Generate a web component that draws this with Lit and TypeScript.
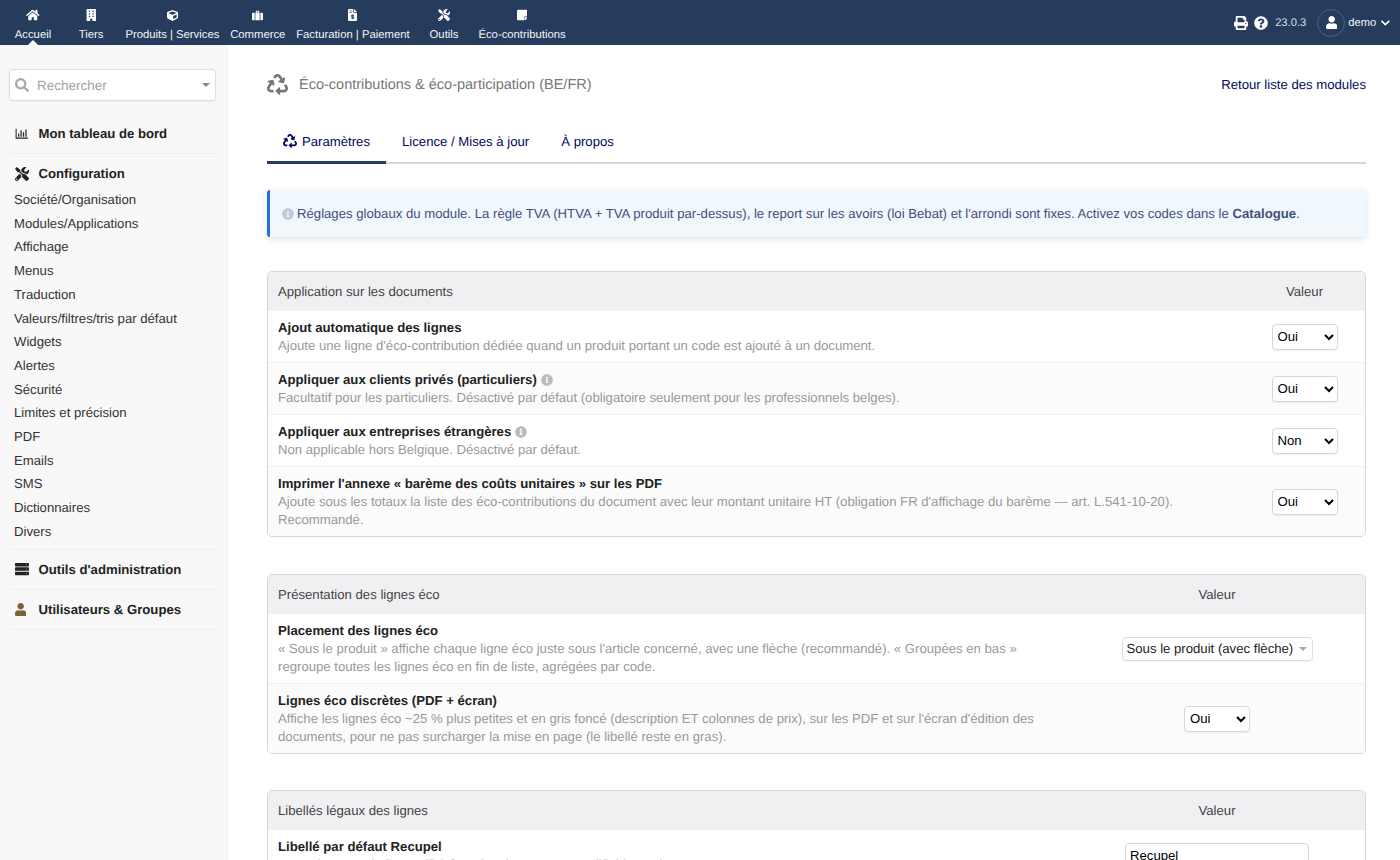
import { LitElement, html, css, svg } from "lit";
import { customElement } from "lit/decorators.js";

const P: Record<string, [number, string]> = {
  home: [576, "M280.37 148.26L96 300.11V464a16 16 0 0 0 16 16l112.06-.29a16 16 0 0 0 15.92-16V368a16 16 0 0 1 16-16h64a16 16 0 0 1 16 16v95.64a16 16 0 0 0 16 16.05L464 480a16 16 0 0 0 16-16V300L295.67 148.26a12.19 12.19 0 0 0-15.3 0zM571.6 251.47L488 182.56V44.05a12 12 0 0 0-12-12h-56a12 12 0 0 0-12 12v72.61L318.47 43a48 48 0 0 0-61 0L4.34 251.47a12 12 0 0 0-1.6 16.9l25.5 31A12 12 0 0 0 45.15 301l235.22-193.74a12.19 12.19 0 0 1 15.3 0L530.9 301a12 12 0 0 0 16.9-1.6l25.5-31a12 12 0 0 0-1.7-16.93z"],
  building: [448, "M48 0h352a24 24 0 0 1 24 24v488H272v-96h-96v96H24V24A24 24 0 0 1 48 0zM120 64v56h56V64zm152 0v56h56V64zM120 176v56h56v-56zm152 0v56h56v-56zM120 288v56h56v-56zm152 0v56h56v-56z"],
  cube: [512, "M239.1 6.3l-208 78c-18.7 7-31.1 25-31.1 45v225.1c0 18.2 10.3 34.8 26.5 42.9l208 104c13.5 6.8 29.4 6.8 42.9 0l208-104c16.3-8.1 26.5-24.8 26.5-42.9V129.3c0-20-12.4-37.9-31.1-44.9l-208-78C262 2.2 250 2.2 239.1 6.3zM256 68.4l192 72v1.1l-192 78-192-78v-1.1l192-72zm32 356V275.5l160-65v133.9l-160 80z"],
  suitcase: [512, "M176 128V72a40 40 0 0 1 40-40h80a40 40 0 0 1 40 40v56h-48V80h-64v48zM48 128h76v352H48A48 48 0 0 1 0 432V176a48 48 0 0 1 48-48zM156 128h200v352H156zM388 128h76a48 48 0 0 1 48 48v256a48 48 0 0 1-48 48h-76z"],
  invoice: [384, "M224 0v136a24 24 0 0 0 24 24h136v304a48 48 0 0 1-48 48H48a48 48 0 0 1-48-48V48A48 48 0 0 1 48 0zM256 0l128 128H256zM64 64v32h96V64zm0 64v32h96v-32zM180 220v28c-30 4-52 24-52 52 0 30 24 42 56 50 20 5 24 9 24 15 0 8-10 11-28 11-14 0-30-4-42-10v40c10 5 26 8 42 9v25h36v-26c32-4 52-24 52-54s-22-42-56-50c-18-4-24-8-24-14s8-10 24-10c12 0 26 3 38 8v-38c-8-3-20-6-34-7v-29z"],
  tools: [512, "M501.1 395.7L384 278.6c-23.1-23.1-57.6-27.6-85.4-13.9L192 158.1V96L64 0 0 64l96 128h62.1l106.6 106.6c-13.6 27.8-9.2 62.3 13.9 85.4l117.1 117.1c14.6 14.6 38.2 14.6 52.7 0l52.7-52.7c14.5-14.6 14.5-38.2 0-52.7zM331.7 225c28.3 0 54.9 11 74.9 31l19.4 19.4c15.8-6.9 30.8-16.5 43.8-29.5 37.1-37.1 49.7-89.3 37.9-136.7-2.2-9-13.5-12.1-20.1-5.5l-74.4 74.4-67.9-11.3L334 98.9l74.4-74.4c6.6-6.6 3.4-17.9-5.7-20.2-47.4-11.7-99.6.9-136.6 37.9-28.5 28.5-41.9 66.1-41.2 103.6l82.1 82.1c8.1-1.9 16.5-2.9 24.7-2.9zm-103.9 82l-56.7-56.7L18.7 402.8c-25 25-25 65.5 0 90.5s65.5 25 90.5 0l123.6-123.6c-7.6-19.9-9.9-41.6-5-62.7zM64 472c-13.2 0-24-10.8-24-24 0-13.3 10.7-24 24-24s24 10.7 24 24c0 13.2-10.7 24-24 24z"],
  note: [448, "M48 32h352a48 48 0 0 1 48 48v240H328a24 24 0 0 0-24 24v136H48a48 48 0 0 1-48-48V80a48 48 0 0 1 48-48zM448 352v6a48 48 0 0 1-14 34l-74 74a48 48 0 0 1-34 14h-6V352z"],
  print: [512, "M448 192V77.25c0-8.49-3.37-16.62-9.37-22.63L393.37 9.37c-6-6-14.14-9.37-22.63-9.37H96C78.33 0 64 14.33 64 32v160c-35.35 0-64 28.65-64 64v112c0 8.84 7.16 16 16 16h48v96c0 17.67 14.33 32 32 32h320c17.67 0 32-14.33 32-32v-96h48c8.84 0 16-7.16 16-16V256c0-35.35-28.65-64-64-64zm-64 256H128v-96h256v96zm0-224H128V64h192v48c0 8.84 7.16 16 16 16h48v96zm48 72c-13.25 0-24-10.75-24-24 0-13.26 10.75-24 24-24s24 10.74 24 24c0 13.25-10.75 24-24 24z"],
  question: [512, "M504 256c0 136.997-111.043 248-248 248S8 392.997 8 256C8 119.083 119.043 8 256 8s248 111.083 248 248zM262.655 90c-54.497 0-89.255 22.957-116.549 63.758-3.536 5.286-2.353 12.415 2.715 16.258l34.699 26.31c5.205 3.947 12.621 3.008 16.665-2.122 17.864-22.658 30.113-35.797 57.303-35.797 20.429 0 45.698 13.148 45.698 32.958 0 14.976-12.363 22.667-32.534 33.976C247.128 238.528 216 254.941 216 296v4c0 6.627 5.373 12 12 12h56c6.627 0 12-5.373 12-12v-1.333c0-28.462 83.186-29.647 83.186-106.667 0-58.002-60.165-102-116.531-102zM256 338c-25.365 0-46 20.635-46 46 0 25.364 20.635 46 46 46s46-20.636 46-46c0-25.365-20.635-46-46-46z"],
  user: [448, "M224 256c70.7 0 128-57.3 128-128S294.7 0 224 0 96 57.3 96 128s57.3 128 128 128zm89.6 32h-16.7c-22.2 10.2-46.9 16-72.9 16s-50.6-5.8-72.9-16h-16.7C60.2 288 0 348.2 0 422.4V464c0 26.5 21.5 48 48 48h352c26.5 0 48-21.5 48-48v-41.6c0-74.2-60.2-134.4-134.4-134.4z"],
  recycle: [512, "M184.561 261.903c3.232 13.997-12.123 24.635-24.068 17.168l-40.736-25.455-50.867 81.402C55.606 356.273 70.96 384 96.012 384H148c6.627 0 12 5.373 12 12v40c0 6.627-5.373 12-12 12H96.115c-75.334 0-121.302-83.048-81.408-146.88l50.822-81.388-40.725-25.448c-12.081-7.547-8.966-25.961 4.879-29.158l110.237-25.45c8.611-1.988 17.201 3.381 19.189 11.99l25.452 110.237zm98.561-182.915l41.289 66.076-40.74 25.457c-12.051 7.528-9 25.953 4.879 29.158l110.237 25.45c8.672 1.999 17.215-3.438 19.189-11.99l25.45-110.237c3.197-13.844-11.99-24.719-24.068-17.168l-40.687 25.424-41.263-66.082c-37.521-60.033-125.209-60.171-162.816 0l-17.963 28.766c-3.51 5.62-1.8 13.021 3.82 16.533l33.919 21.195c5.62 3.512 13.024 1.803 16.536-3.817l17.961-28.743c12.712-20.341 41.973-19.676 54.257-.022zM497.288 301.12l-27.515-44.065c-3.511-5.623-10.916-7.334-16.538-3.821l-33.861 21.159c-5.62 3.512-7.33 10.915-3.818 16.536l27.564 44.112c13.257 21.211-2.057 48.96-27.136 48.96H320V336.02c0-14.213-17.242-21.383-27.313-11.313l-80 79.981c-6.249 6.248-6.249 16.379 0 22.627l80 79.989C302.689 517.308 320 510.3 320 495.989V448h95.88c75.274 0 121.335-82.997 81.408-146.88z"],
  info: [512, "M256 8C119.043 8 8 119.083 8 256c0 136.997 111.043 248 248 248s248-111.003 248-248C504 119.083 392.957 8 256 8zm0 110c23.196 0 42 18.804 42 42s-18.804 42-42 42-42-18.804-42-42 18.804-42 42-42zm56 254c0 6.627-5.373 12-12 12h-88c-6.627 0-12-5.373-12-12v-24c0-6.627 5.373-12 12-12h12v-64h-12c-6.627 0-12-5.373-12-12v-24c0-6.627 5.373-12 12-12h64c6.627 0 12 5.373 12 12v100h12c6.627 0 12 5.373 12 12v24z"],
  search: [512, "M505 442.7L405.3 343c-4.5-4.5-10.6-7-17-7H372c27.6-35.3 44-79.7 44-128C416 93.1 322.9 0 208 0S0 93.1 0 208s93.1 208 208 208c48.3 0 92.7-16.4 128-44v16.3c0 6.4 2.5 12.5 7 17l99.7 99.7c9.4 9.4 24.6 9.4 33.9 0l28.3-28.3c9.4-9.4 9.4-24.6.1-34zM208 336c-70.7 0-128-57.2-128-128 0-70.7 57.2-128 128-128 70.7 0 128 57.2 128 128 0 70.7-57.2 128-128 128z"],
  chart: [512, "M24 64h40v352h448v48H40a16 16 0 0 1-16-16zM120 256h48v128h-48zM216 128h48v256h-48zM312 208h48v176h-48zM408 96h48v288h-48z"],
  server: [512, "M32 32h448a32 32 0 0 1 32 32v64a32 32 0 0 1-32 32H32a32 32 0 0 1-32-32V64a32 32 0 0 1 32-32zm384 48a16 16 0 1 0 0 32 16 16 0 0 0 0-32zM32 192h448a32 32 0 0 1 32 32v64a32 32 0 0 1-32 32H32a32 32 0 0 1-32-32v-64a32 32 0 0 1 32-32zm384 48a16 16 0 1 0 0 32 16 16 0 0 0 0-32zM32 352h448a32 32 0 0 1 32 32v64a32 32 0 0 1-32 32H32a32 32 0 0 1-32-32v-64a32 32 0 0 1 32-32zm384 48a16 16 0 1 0 0 32 16 16 0 0 0 0-32z"],
  chevron: [448, "M207 381.5L12.7 187.1c-9.4-9.4-9.4-24.6 0-33.9l22.7-22.7c9.4-9.4 24.5-9.4 33.9 0L224 284.5l154.7-154c9.4-9.3 24.5-9.3 33.9 0l22.7 22.7c9.4 9.4 9.4 24.6 0 33.9L241 381.5c-9.4 9.4-24.6 9.4-34 0z"],
};

const ico = (n: string, size: number, color: string) => {
  const [w, d] = P[n];
  return html`<svg class="ico" viewBox="0 0 ${w} 512" width=${(size * w) / 512} height=${size} fill=${color}>${svg`<path d=${d}></path>`}</svg>`;
};

const NAV: [string, string, number][] = [
  ["home", "Accueil", 12],
  ["building", "Tiers", 12],
  ["cube", "Produits | Services", 11],
  ["suitcase", "Commerce", 11],
  ["invoice", "Facturation | Paiement", 12],
  ["tools", "Outils", 12],
  ["note", "Éco-contributions", 12],
];

const CONFIG = ["Société/Organisation","Modules/Applications","Affichage","Menus","Traduction","Valeurs/filtres/tris par défaut","Widgets","Alertes","Sécurité","Limites et précision","PDF","Emails","SMS","Dictionnaires","Divers"];

@customElement("app-root")
export class AppRoot extends LitElement {
  static styles = css`
    :host { display: block; height: 860px; overflow: hidden; font-family: "Liberation Sans", Arial, sans-serif; font-size: 13.16px; color: #222; background: #fff; text-rendering: geometricPrecision; }
    .ico { display: block; flex: none; }
    .top { height: 45px; background: #263c5c; color: #fff; display: flex; align-items: stretch; padding-left: 4px; }
    .nav { min-width: 58px; padding: 0 5.4px; box-sizing: border-box; display: flex; flex-direction: column; align-items: center; position: relative; }
    .nav .ic { height: 12px; margin-top: 9px; display: flex; align-items: center; }
    .nav span { font-size: 11.3px; line-height: 14px; margin-top: 6.5px; white-space: nowrap; color: #f4f6f8; }
    .nav.on::after { content: ""; position: absolute; bottom: 0; left: 50%; margin-left: -5px; border: 5px solid transparent; border-top: 0; border-bottom-color: #fff; }
    .right { margin-left: auto; display: flex; align-items: center; padding-right: 10px; }
    .ver { font-size: 11.2px; color: #d5dbe4; margin-left: 7px; margin-right: 11px; }
    .right .q { margin-left: 6px; }
    .avatar { width: 28px; height: 28px; box-sizing: border-box; border: 1px solid #4d6180; border-radius: 50%; display: flex; align-items: center; justify-content: center; }
    .demo { font-size: 11.2px; margin: 0 5px 0 3px; color: #f4f6f8; }
    .body { display: flex; height: 815px; }
    .side { width: 228px; box-sizing: border-box; background: #f8f8f8; border-right: 1px solid #efefef; padding: 24px 11px 0 9px; flex: none; }
    .search { height: 32px; box-sizing: border-box; background: #fff; border: 1px solid #dcdcdc; border-radius: 4px; box-shadow: 0 1px 2px #0000000d; display: flex; align-items: center; padding: 0 5px; color: #aaa; margin-bottom: 13px; }
    .search b { font-weight: 400; font-size: 13.5px; margin-left: 8px; color: #a3a3a3; }
    .caret { width: 0; height: 0; border: 4px solid transparent; border-bottom: 0; border-top: 4px solid #888; margin-left: auto; }
    .group { display: flex; align-items: center; height: 40px; box-sizing: border-box; border-bottom: 1px solid #efefef; padding-left: 6px; font-weight: 700; color: #222; }
    .group .g { width: 23.5px; }
    .group.nob { border-bottom: 0; height: 39px; }
    .sub { display: block; line-height: 23.7px; padding-left: 5px; color: #333; }
    .subs { border-bottom: 1px solid #efefef; padding-bottom: 5px; margin-top: -5px; }
    .main { flex: 1; padding: 0 34px 0 39px; min-width: 0; }
    .head { display: flex; align-items: center; height: 79px; margin-bottom: -2px; }
    .head h1 { font-weight: 400; font-size: 14.5px; margin: 0 0 0 11px; color: #777; }
    .head a { margin-left: auto; color: #000b5c; }
    .tabs { display: flex; border-bottom: 2px solid #d8d8d8; height: 40px; margin-bottom: 26px; }
    .tab { display: flex; align-items: center; gap: 5px; padding: 0 16px 4px; color: #00085c; margin-bottom: -2px; }
    .tab.on { border-bottom: 3px solid #263c5c; padding-bottom: 1px; }
    .alert { background: #f0f7fd; border-left: 3px solid #2a6dd8; border-radius: 3px; box-shadow: 0 2px 6px #0000001f; height: 47px; display: flex; align-items: center; padding-left: 12px; color: #434f7b; margin-bottom: 34px; white-space: nowrap; gap: 3px; }
    .alert b { font-weight: 700; }
    .card { border: 1px solid #d6d6d6; border-radius: 5px; margin-bottom: 36px; overflow: hidden; }
    .card.a { margin-bottom: 37px; }
    .row { display: grid; grid-template-columns: 1fr var(--vw); align-items: center; border-top: 1px solid #f1f1f1; }
    .row:nth-child(2) { border-top: 0; }
    .row:nth-child(odd) { background: #fbfbfb; }
    .row.h { background: #f0f0f2; height: 39px; border-top: 0; color: #444; }
    .row.h .l { padding: 0 10px; }
    .row.h .v { display: block; text-align: center; }
    .l { padding: 8px 10px 7px; min-width: 0; }
    .t { font-weight: 700; line-height: 18px; color: #222; display: flex; align-items: center; gap: 4px; }
    .d { line-height: 18px; color: #999; }
    .v { display: flex; justify-content: center; align-items: center; }
    select { width: 66px; height: 26px; font: 13.16px "Liberation Sans", Arial, sans-serif; background: #fff; border: 1px solid #d6d6d6; border-radius: 4px; box-shadow: 0 1px 2px #0000000f; color: #000; padding: 0 0 0 1px; }
    .s2 { width: 191px; height: 24px; box-sizing: border-box; border: 1px solid #dcdcdc; border-radius: 4px; background: #fff; display: flex; align-items: center; padding: 0 5px 0 4px; color: #222; white-space: nowrap; box-shadow: 0 1px 2px #0000000a; }
    .s2 .caret { border-top-color: #aaa; }
    .inp { width: 184px; height: 26px; box-sizing: border-box; border: 1px solid #d6d6d6; border-radius: 4px; background: #fff; padding: 0 4px; font: 13.16px "Liberation Sans", Arial, sans-serif; color: #000; }
  `;

  private sel(v: string) {
    return html`<select><option>${v}</option></select>`;
  }

  private row(t: string, d: unknown, v: unknown, info = false) {
    return html`<div class="row">
      <div class="l">
        <div class="t">${t}${info ? ico("info", 12, "#bbb") : ""}</div>
        <div class="d">${d}</div>
      </div>
      <div class="v">${v}</div>
    </div>`;
  }

  render() {
    return html`
      <div class="top">
        ${NAV.map(([i, t, s], n) => html`<div class="nav ${n === 0 ? "on" : ""}"><div class="ic">${ico(i, s, "#fff")}</div><span>${t}</span></div>`)}
        <div class="right">
          ${ico("print", 14, "#fff")}
          <div class="q">${ico("question", 14, "#fff")}</div>
          <div class="ver">23.0.3</div>
          <div class="avatar">${ico("user", 13, "#fff")}</div>
          <div class="demo">demo</div>
          ${ico("chevron", 10, "#fff")}
        </div>
      </div>
      <div class="body">
        <div class="side">
          <div class="search">${ico("search", 14, "#aaa")}<b>Rechercher</b><div class="caret"></div></div>
          <div class="group"><div class="g">${ico("chart", 13, "#222")}</div>Mon tableau de bord</div>
          <div class="group nob"><div class="g">${ico("tools", 14, "#222")}</div>Configuration</div>
          <div class="subs">${CONFIG.map((c) => html`<span class="sub">${c}</span>`)}</div>
          <div class="group"><div class="g">${ico("server", 14, "#222")}</div>Outils d'administration</div>
          <div class="group"><div class="g">${ico("user", 13, "#7a6138")}</div>Utilisateurs &amp; Groupes</div>
        </div>
        <div class="main">
          <div class="head">
            ${ico("recycle", 21, "#777")}
            <h1>Éco-contributions &amp; éco-participation (BE/FR)</h1>
            <a>Retour liste des modules</a>
          </div>
          <div class="tabs">
            <div class="tab on">${ico("recycle", 14, "#00085c")}Paramètres</div>
            <div class="tab">Licence / Mises à jour</div>
            <div class="tab">À propos</div>
          </div>
          <div class="alert">${ico("info", 12, "#c3c9d6")}<span>Réglages globaux du module. La règle TVA (HTVA + TVA produit par-dessus), le report sur les avoirs (loi Bebat) et l'arrondi sont fixes. Activez vos codes dans le <b>Catalogue</b>.</span></div>
          <div class="card a" style="--vw:121px">
            <div class="row h"><div class="l">Application sur les documents</div><div class="v">Valeur</div></div>
            ${this.row("Ajout automatique des lignes", "Ajoute une ligne d'éco-contribution dédiée quand un produit portant un code est ajouté à un document.", this.sel("Oui"))}
            ${this.row("Appliquer aux clients privés (particuliers)", "Facultatif pour les particuliers. Désactivé par défaut (obligatoire seulement pour les professionnels belges).", this.sel("Oui"), true)}
            ${this.row("Appliquer aux entreprises étrangères", "Non applicable hors Belgique. Désactivé par défaut.", this.sel("Non"), true)}
            ${this.row("Imprimer l'annexe « barème des coûts unitaires » sur les PDF", "Ajoute sous les totaux la liste des éco-contributions du document avec leur montant unitaire HT (obligation FR d'affichage du barème — art. L.541-10-20). Recommandé.", this.sel("Oui"))}
          </div>
          <div class="card" style="--vw:296px">
            <div class="row h"><div class="l">Présentation des lignes éco</div><div class="v">Valeur</div></div>
            ${this.row("Placement des lignes éco", "« Sous le produit » affiche chaque ligne éco juste sous l'article concerné, avec une flèche (recommandé). « Groupées en bas » regroupe toutes les lignes éco en fin de liste, agrégées par code.", html`<div class="s2">Sous le produit (avec flèche)<div class="caret"></div></div>`)}
            ${this.row("Lignes éco discrètes (PDF + écran)", "Affiche les lignes éco ~25 % plus petites et en gris foncé (description ET colonnes de prix), sur les PDF et sur l'écran d'édition des documents, pour ne pas surcharger la mise en page (le libellé reste en gras).", this.sel("Oui"))}
          </div>
          <div class="card" style="--vw:296px">
            <div class="row h"><div class="l">Libellés légaux des lignes</div><div class="v">Valeur</div></div>
            ${this.row("Libellé par défaut Recupel", "Texte du poste de ligne affiché sur les documents, modifiable par langue.", html`<input class="inp" value="Recupel" />`)}
          </div>
        </div>
      </div>
    `;
  }
}
